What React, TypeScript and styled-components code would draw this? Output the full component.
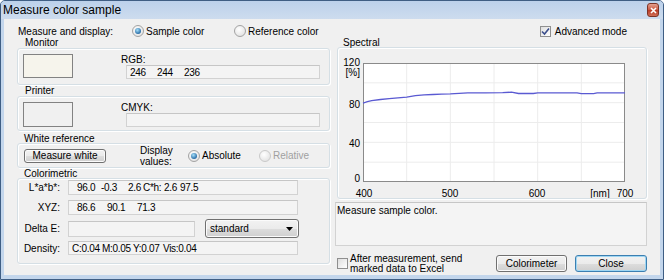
import styled, { createGlobalStyle } from "styled-components";

const GlobalStyle = createGlobalStyle`
  html, body { margin: 0; padding: 0; background: #ffffff; }
  body {
    font-family: "Liberation Sans", Arial, sans-serif;
    font-size: 10px;
    color: #000;
  }
  * { box-sizing: border-box; }
`;

const Window = styled.div`
  width: 664px;
  height: 280px;
  display: flex;
  flex-direction: column;
  border: 1px solid #3f5e84;
  border-radius: 5px 5px 0 0;
  background: #c3d6ec;
  overflow: hidden;
`;

const TitleBar = styled.div`
  height: 18px;
  flex: none;
  display: flex;
  align-items: center;
  justify-content: space-between;
  padding: 0 4px 0 2px;
  font-size: 12px;
  background: linear-gradient(#bcd1eb, #cddcee);
`;

const CloseBox = styled.div`
  width: 12px;
  height: 14px;
  border: 1px solid #7d3326;
  border-radius: 3px;
  background: linear-gradient(#e4a08f, #c8553f 50%, #b83a25 51%, #cf6d55);
  display: flex;
  align-items: center;
  justify-content: center;
`;

const Frame = styled.div`
  flex: 1;
  padding: 0 3px 4px;
  display: flex;
`;

const Client = styled.div`
  flex: 1;
  display: flex;
  background: #f0f0f0;
`;

/* ---------- shared controls ---------- */

const RadioDot = styled.span<{ $checked?: boolean; $disabled?: boolean }>`
  flex: none;
  width: 12px;
  height: 12px;
  border-radius: 50%;
  border: 1px solid ${(p) => (p.$disabled ? "#c9c9c9" : "#a3a3a3")};
  background: radial-gradient(circle at 40% 35%, #ffffff, #dcdcdc);
  display: inline-flex;
  align-items: center;
  justify-content: center;
  &::after {
    content: "";
    display: ${(p) => (p.$checked ? "block" : "none")};
    width: 6px;
    height: 6px;
    border-radius: 50%;
    background: radial-gradient(circle at 40% 35%, #a6e0fa, #2a6ea8 70%, #1b4f80);
  }
`;

const Option = styled.label<{ $w?: number; $disabled?: boolean }>`
  display: flex;
  align-items: center;
  gap: 2px;
  width: ${(p) => (p.$w ? `${p.$w}px` : "auto")};
  color: ${(p) => (p.$disabled ? "#a0a0a0" : "#000")};
  white-space: nowrap;
`;

const CheckBox = styled.span`
  flex: none;
  width: 11px;
  height: 11px;
  border: 1px solid #8f8f8f;
  background: linear-gradient(135deg, #dedede, #ffffff);
  display: inline-flex;
  align-items: center;
  justify-content: center;
`;

const Button = styled.button<{ $w: number; $h: number; $default?: boolean }>`
  width: ${(p) => p.$w}px;
  height: ${(p) => p.$h}px;
  padding: 0;
  font: inherit;
  color: #000;
  border: 1px solid ${(p) => (p.$default ? "#3c7fb1" : "#707070")};
  border-radius: 3px;
  background: linear-gradient(#f2f2f2 0%, #ebebeb 50%, #dddddd 51%, #cfcfcf 100%);
  box-shadow: inset 0 0 0 1px ${(p) => (p.$default ? "#9fd6f2" : "#fbfbfb")};
`;

const Field = styled.div<{ $w: number; $h: number; $pad?: number }>`
  width: ${(p) => p.$w}px;
  height: ${(p) => p.$h}px;
  flex: none;
  display: flex;
  align-items: center;
  padding-left: ${(p) => p.$pad ?? 3}px;
  border: 1px solid #d2d2d2;
  border-top-color: #c6c6c6;
  background: #f4f4f4;
  white-space: nowrap;
  letter-spacing: -0.3px;
`;

const Cell = styled.span<{ $w: number }>`
  display: inline-block;
  width: ${(p) => p.$w}px;
  flex: none;
`;

/* ---------- left side ---------- */

const Left = styled.div`
  width: 313px;
  margin-left: 13px;
  display: flex;
  flex-direction: column;
`;

const ModeRow = styled.div`
  margin-top: 6px;
  height: 12px;
  padding-left: 1px;
  display: flex;
  align-items: center;
`;

const ModeLabel = styled.span`
  width: 114px;
`;

const GroupTitle = styled.div<{ $mt?: number; $indent?: number }>`
  height: 12px;
  line-height: 12px;
  margin-top: ${(p) => p.$mt ?? 0}px;
  padding-left: ${(p) => p.$indent ?? 8}px;
  position: relative;
  z-index: 1;
`;

const GroupBox = styled.div<{ $h: number; $mt?: number }>`
  height: ${(p) => p.$h}px;
  margin-top: ${(p) => p.$mt ?? -1}px;
  border: 1px solid #d5dfe5;
  border-radius: 3px;
  box-shadow: inset 1px 1px 0 #ffffff, 1px 1px 0 #ffffff;
`;

const SwatchGroup = styled(GroupBox)`
  display: flex;
  padding: 5px;
`;

const Swatch = styled.div<{ $color: string; $h: number }>`
  width: 50px;
  height: ${(p) => p.$h}px;
  flex: none;
  border: 1px solid #828282;
  background: ${(p) => p.$color};
`;

const FieldColumn = styled.div`
  margin-left: 48px;
  display: flex;
  flex-direction: column;
`;

const FieldLabel = styled.div`
  height: 11px;
  line-height: 11px;
`;

const FieldIndent = styled.div`
  margin-left: 5px;
`;

const WhiteGroup = styled(GroupBox)`
  display: flex;
  align-items: center;
  padding-left: 6px;
`;

const DisplayLabel = styled.div`
  width: 48px;
  margin-left: 34px;
  line-height: 11px;
`;

const ColorGroup = styled(GroupBox)`
  display: flex;
  flex-direction: column;
  padding-top: 1px;
`;

const DataRow = styled.div<{ $mt?: number; $h: number }>`
  display: flex;
  align-items: center;
  height: ${(p) => p.$h}px;
  margin-top: ${(p) => p.$mt ?? 0}px;
`;

const RowLabel = styled.span`
  width: 42px;
  margin-right: 8px;
  text-align: right;
  white-space: nowrap;
`;

const Select = styled.div`
  width: 94px;
  height: 19px;
  margin-left: 10px;
  display: flex;
  align-items: center;
  justify-content: space-between;
  padding: 0 5px 0 4px;
  border: 1px solid #707070;
  border-radius: 3px;
  background: linear-gradient(#f2f2f2 0%, #ebebeb 50%, #dddddd 51%, #cfcfcf 100%);
  box-shadow: inset 0 0 0 1px #fbfbfb;
`;

/* ---------- right side ---------- */

const Right = styled.div`
  width: 310px;
  margin-left: 7px;
  display: flex;
  flex-direction: column;
`;

const AdvancedRow = styled.div`
  margin-top: 6px;
  height: 13px;
  padding-right: 20px;
  display: flex;
  justify-content: flex-end;
`;

const CheckOption = styled.label`
  display: flex;
  align-items: center;
  gap: 4px;
  white-space: nowrap;
`;

const SpectralBox = styled(GroupBox)`
  display: flex;
`;

const MessageBox = styled.div`
  height: 44px;
  margin: 3px 0 0 -2px;
  padding: 2px 0 0 1px;
  border: 1px solid #d2d2d2;
  border-top-color: #c6c6c6;
  background: #f4f4f4;
`;

const BottomRow = styled.div`
  margin-top: 9px;
  height: 17px;
  display: flex;
  align-items: center;
`;

const ExcelText = styled.div`
  width: 150px;
  line-height: 10px;
  margin-left: 2px;
`;

const ButtonGap = styled.div`
  margin-left: auto;
  display: flex;
  gap: 8px;
`;

const CheckMark = () => (
  <svg width="9" height="9" viewBox="0 0 9 9">
    <path d="M1 4.5 L3.5 7 L8 1.5" fill="none" stroke="#3c4f8c" strokeWidth="1.6" />
  </svg>
);

/* ---------- chart ---------- */

const PLOT_X = 25;
const PLOT_Y = 15;
const PLOT_W = 262;
const PLOT_H = 119;

const spectrum: [number, number][] = [
  [400, 79.5], [405, 81], [410, 82], [420, 83.2], [430, 84], [440, 84.8], [450, 85.6],
  [460, 87], [470, 87.8], [480, 88.2], [490, 88.6], [500, 88.9], [510, 89.4], [520, 89.8],
  [540, 90], [560, 90.2], [570, 90.6], [578, 89.2], [595, 89.2], [600, 89.9], [620, 90],
  [645, 90], [650, 89.1], [664, 89.1], [668, 89.9], [700, 90],
];

const px = (nm: number) => PLOT_X + ((nm - 400) / 300) * PLOT_W;
const py = (v: number) => PLOT_Y + PLOT_H - (v / 120) * PLOT_H;

function SpectralChart() {
  const line = spectrum.map(([nm, v]) => `${px(nm).toFixed(1)},${py(v).toFixed(1)}`).join(" ");
  const label = { fontFamily: "Liberation Sans, Arial, sans-serif", fontSize: 10, fill: "#000" };
  return (
    <svg width="308" height="150" viewBox="0 0 308 150">
      <rect x={PLOT_X} y={PLOT_Y} width={PLOT_W} height={PLOT_H} fill="#ffffff" />
      {[1, 2, 3, 4, 5].map((i) => (
        <line key={`v${i}`} x1={PLOT_X + (i * PLOT_W) / 6} x2={PLOT_X + (i * PLOT_W) / 6}
          y1={PLOT_Y} y2={PLOT_Y + PLOT_H} stroke="#ececec" />
      ))}
      {[1, 2, 3, 4, 5].map((i) => (
        <line key={`h${i}`} y1={PLOT_Y + (i * PLOT_H) / 6} y2={PLOT_Y + (i * PLOT_H) / 6}
          x1={PLOT_X} x2={PLOT_X + PLOT_W} stroke="#ececec" />
      ))}
      <rect x={PLOT_X + 0.5} y={PLOT_Y + 0.5} width={PLOT_W - 1} height={PLOT_H - 1}
        fill="none" stroke="#8a8a8a" />
      <polyline points={line} fill="none" stroke="#5a5ad2" strokeWidth="1.3" />
      <g style={label} textAnchor="end">
        <text x="22" y="18">120</text>
        <text x="22" y="28">[%]</text>
        <text x="22" y="60">80</text>
        <text x="22" y="99">40</text>
        <text x="22" y="134">0</text>
      </g>
      <g style={label} textAnchor="middle">
        <text x="26" y="149">400</text>
        <text x="112" y="149">500</text>
        <text x="199" y="149">600</text>
        <text x="262" y="149">[nm]</text>
        <text x="287" y="149">700</text>
      </g>
    </svg>
  );
}

export default function App() {
  return (
    <>
      <GlobalStyle />
      <Window>
        <TitleBar>
          <span>Measure color sample</span>
          <CloseBox>
            <svg width="7" height="7" viewBox="0 0 7 7">
              <path d="M1 1 L6 6 M6 1 L1 6" stroke="#ffffff" strokeWidth="1.6" />
            </svg>
          </CloseBox>
        </TitleBar>
        <Frame>
          <Client>
            <Left>
              <ModeRow>
                <ModeLabel>Measure and display:</ModeLabel>
                <Option $w={102}>
                  <RadioDot $checked />
                  Sample color
                </Option>
                <Option>
                  <RadioDot />
                  Reference color
                </Option>
              </ModeRow>

              <GroupTitle>Monitor</GroupTitle>
              <SwatchGroup $h={37}>
                <Swatch $color="rgb(246,244,236)" $h={24} />
                <FieldColumn>
                  <FieldLabel>RGB:</FieldLabel>
                  <FieldIndent>
                    <Field $w={194} $h={14}>
                      <Cell $w={27}>246</Cell>
                      <Cell $w={27}>244</Cell>
                      <Cell $w={27}>236</Cell>
                    </Field>
                  </FieldIndent>
                </FieldColumn>
              </SwatchGroup>

              <GroupTitle>Printer</GroupTitle>
              <SwatchGroup $h={35}>
                <Swatch $color="#f0f0f0" $h={25} />
                <FieldColumn>
                  <FieldLabel>CMYK:</FieldLabel>
                  <FieldIndent>
                    <Field $w={194} $h={14} />
                  </FieldIndent>
                </FieldColumn>
              </SwatchGroup>

              <GroupTitle $mt={2} $indent={7}>White reference</GroupTitle>
              <WhiteGroup $h={25} $mt={-2}>
                <Button $w={82} $h={14}>Measure white</Button>
                <DisplayLabel>
                  Display
                  <br />
                  values:
                </DisplayLabel>
                <Option $w={71}>
                  <RadioDot $checked />
                  Absolute
                </Option>
                <Option $disabled>
                  <RadioDot $disabled />
                  Relative
                </Option>
              </WhiteGroup>

              <GroupTitle $indent={7}>Colorimetric</GroupTitle>
              <ColorGroup $h={86} $mt={-2}>
                <DataRow $h={15}>
                  <RowLabel>L*a*b*:</RowLabel>
                  <Field $w={230} $h={15} $pad={8}>
                    <Cell $w={24}>96.0</Cell>
                    <Cell $w={27}>-0.3</Cell>
                    <Cell $w={15}>2.6</Cell>
                    <Cell $w={21}>C*h:</Cell>
                    <Cell $w={16}>2.6</Cell>
                    <Cell $w={20}>97.5</Cell>
                  </Field>
                </DataRow>
                <DataRow $h={15} $mt={5}>
                  <RowLabel>XYZ:</RowLabel>
                  <Field $w={230} $h={15} $pad={8}>
                    <Cell $w={30}>86.6</Cell>
                    <Cell $w={30}>90.1</Cell>
                    <Cell $w={30}>71.3</Cell>
                  </Field>
                </DataRow>
                <DataRow $h={19} $mt={4}>
                  <RowLabel>Delta E:</RowLabel>
                  <Field $w={127} $h={16} />
                  <Select>
                    <span>standard</span>
                    <svg width="7" height="4" viewBox="0 0 7 4">
                      <path d="M0 0 H7 L3.5 4 Z" fill="#000" />
                    </svg>
                  </Select>
                </DataRow>
                <DataRow $h={14} $mt={3}>
                  <RowLabel>Density:</RowLabel>
                  <Field $w={230} $h={14} $pad={3}>
                    <Cell $w={30}>C:0.04</Cell>
                    <Cell $w={31}>M:0.05</Cell>
                    <Cell $w={30}>Y:0.07</Cell>
                    <Cell $w={40}>Vis:0.04</Cell>
                  </Field>
                </DataRow>
              </ColorGroup>
            </Left>

            <Right>
              <AdvancedRow>
                <CheckOption>
                  <CheckBox>
                    <CheckMark />
                  </CheckBox>
                  Advanced mode
                </CheckOption>
              </AdvancedRow>
              <GroupTitle $mt={-1} $indent={6}>Spectral</GroupTitle>
              <SpectralBox $h={152} $mt={-2}>
                <SpectralChart />
              </SpectralBox>
              <MessageBox>Measure sample color.</MessageBox>
              <BottomRow>
                <CheckBox />
                <ExcelText>
                  After measurement, send
                  <br />
                  marked data to Excel
                </ExcelText>
                <ButtonGap>
                  <Button $w={71} $h={17}>Colorimeter</Button>
                  <Button $w={72} $h={17} $default>Close</Button>
                </ButtonGap>
              </BottomRow>
            </Right>
          </Client>
        </Frame>
      </Window>
    </>
  );
}
